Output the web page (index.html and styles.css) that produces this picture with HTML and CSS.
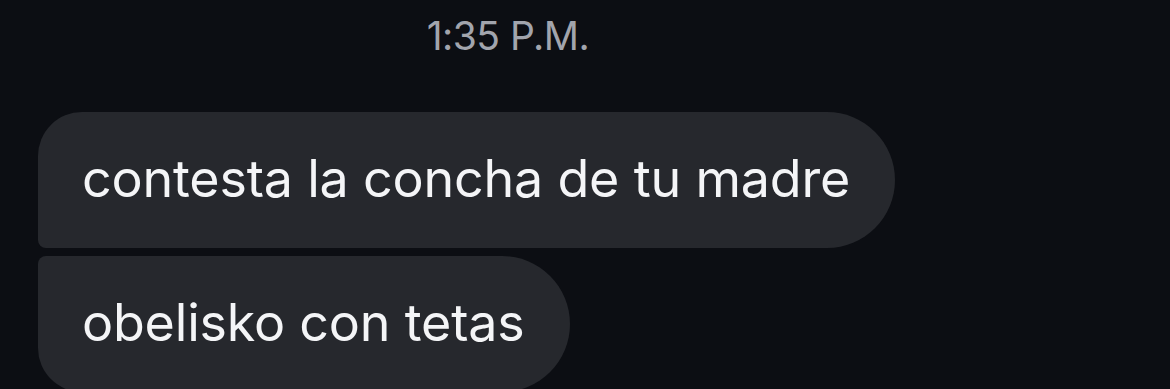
FILE: index.html
```html
<!DOCTYPE html>
<html lang="es">
<head>
    <meta charset="UTF-8">
    <meta name="viewport" content="width=device-width, initial-scale=1.0">
    <link rel="stylesheet" href="styles.css">
    <title>chat</title>
</head>
<body>
    <div class="chat">
        <p class="time">1:35 P.M.</p>
        <div class="thread">
            <div class="bubble first"><p>contesta la concha de tu madre</p></div>
            <div class="bubble last"><p>obelisko con tetas</p></div>
        </div>
    </div>
</body>
</html>
```

FILE: styles.css
```css
*{
    margin: 0;
    padding: 0;
    box-sizing: border-box;
}
body{
    background-color: #0c0e13;
    font-family: Inter, "Noto Sans", sans-serif;
    height: 389px;
    overflow: hidden;
}
.chat{
    display: flex;
    flex-direction: column;
}
.time{
    text-align: center;
    color: #a2a5ad;
    font-size: 39px;
    line-height: 46px;
    padding-top: 13px;
    padding-right: 154px;
    letter-spacing: -0.5px;
}
.thread{
    display: flex;
    flex-direction: column;
    align-items: flex-start;
    gap: 8px;
    margin-top: 53px;
    padding-left: 38px;
}
.bubble{
    background-color: #26282d;
    color: #f4f5f7;
    font-size: 52px;
    height: 136px;
    display: flex;
    align-items: center;
    padding: 0 45px 4px 44px;
}
.bubble p{
    letter-spacing: -0.2px;
}
.first{
    border-radius: 44px 68px 68px 8px;
}
.last{
    border-radius: 8px 68px 68px 44px;
}
```
